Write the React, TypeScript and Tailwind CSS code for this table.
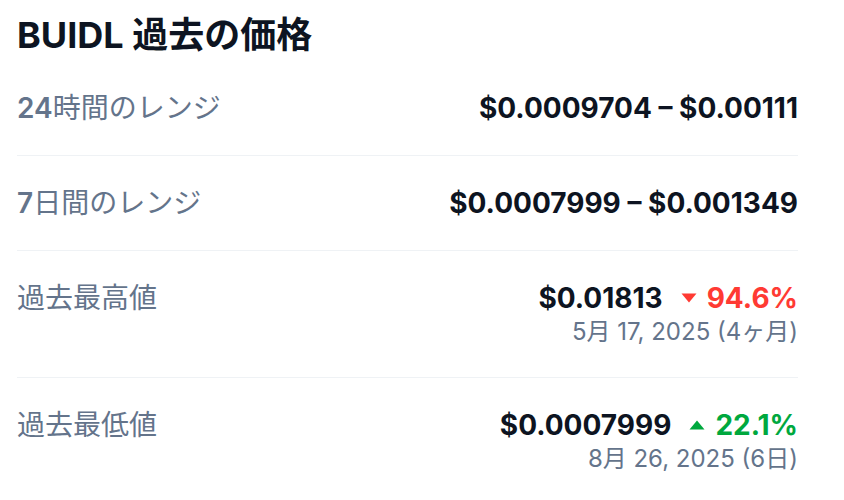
const FONT = "font-['Inter','Noto_Sans_CJK_JP',sans-serif]";

const Caret = ({ up }: { up?: boolean }) => (
  <svg width="16" height="10" viewBox="0 0 16 10" className="mr-[10px]">
    {up ? (
      <path d="M8 0.5 L15.5 9.5 L0.5 9.5 Z" fill="#00a83e" />
    ) : (
      <path d="M0.5 0.5 L15.5 0.5 L8 9.5 Z" fill="#ff3a33" />
    )}
  </svg>
);

const Row = ({
  label,
  children,
  last,
}: {
  label: React.ReactNode;
  children: React.ReactNode;
  last?: boolean;
}) => (
  <div
    className={
      "flex justify-between items-start py-[31px] " +
      (last ? "" : "border-b border-[#eff2f5]")
    }
  >
    <div className="text-[28px] leading-[32px] text-[#64748b]">{label}</div>
    <div className="flex flex-col items-end">{children}</div>
  </div>
);

const App = () => {
  return (
    <div className={`${FONT} bg-white w-[844px] h-[500px] overflow-hidden`}>
      <div className="ml-[17px] w-[781px] pt-[15px]">
        <h2 className="text-[36px] leading-[40px] font-bold text-[#0d1421] mb-[6px]">
          BUIDL 過去の価格
        </h2>

        <Row label={<><span className="font-semibold">24</span>時間のレンジ</>}>
          <div className="text-[28px] leading-[32px] font-bold text-[#0d1421]">
            $0.0009704 – $0.00111
          </div>
        </Row>

        <Row label={<><span className="font-semibold">7</span>日間のレンジ</>}>
          <div className="text-[28px] leading-[32px] font-bold text-[#0d1421]">
            $0.0007999 – $0.001349
          </div>
        </Row>

        <Row label="過去最高値">
          <div className="flex items-center text-[28px] leading-[32px] font-bold">
            <span className="text-[#0d1421] mr-[18px]">$0.01813</span>
            <Caret />
            <span className="text-[#ff3a33]">94.6%</span>
          </div>
          <div className="text-[24px] leading-[28px] text-[#64748b] mt-[4px]">
            5月 17, 2025 (4ヶ月)
          </div>
        </Row>

        <Row label="過去最低値" last>
          <div className="flex items-center text-[28px] leading-[32px] font-bold">
            <span className="text-[#0d1421] mr-[18px]">$0.0007999</span>
            <Caret up />
            <span className="text-[#00a83e]">22.1%</span>
          </div>
          <div className="text-[24px] leading-[28px] text-[#64748b] mt-[4px]">
            8月 26, 2025 (6日)
          </div>
        </Row>
      </div>
    </div>
  );
};

export default App;
